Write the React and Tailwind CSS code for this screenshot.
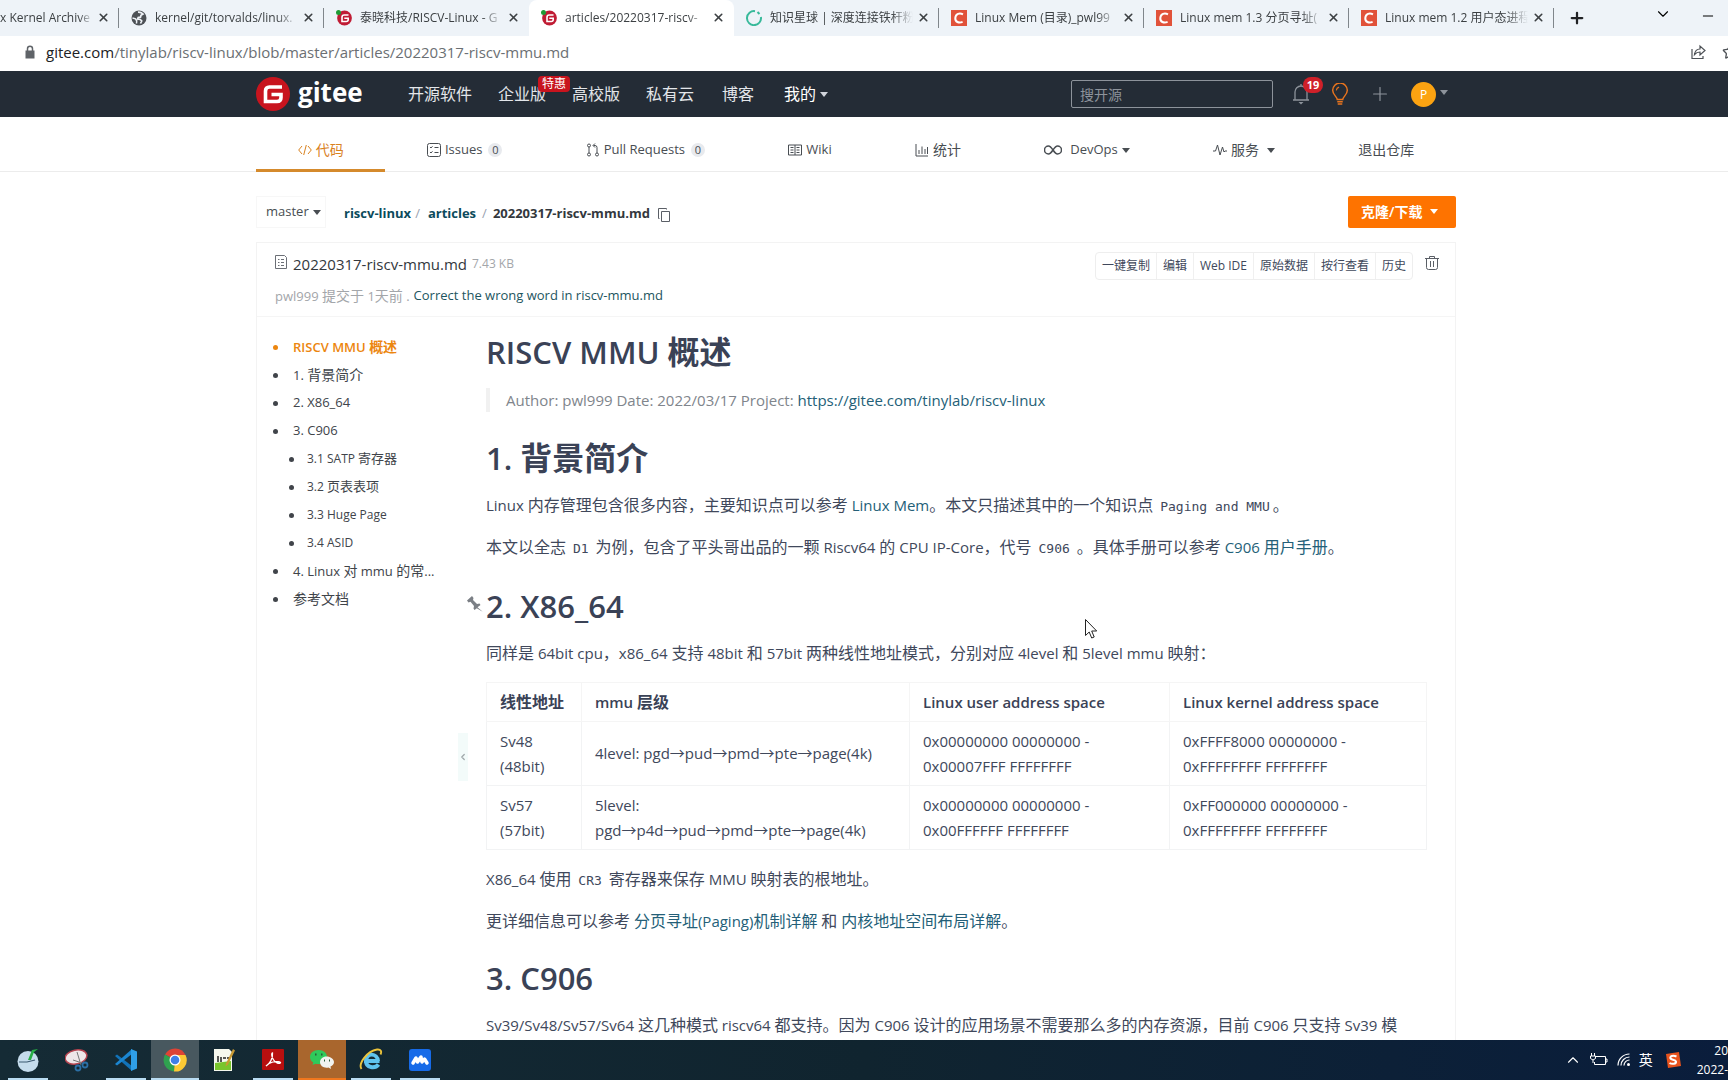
import { ChevronDown, ChevronLeft, ChevronUp, Minus, Plus, Star, X } from 'lucide-react';

const CJK = /([\u2e80-\u9fff\uff00-\uffef]+)/;

// Latin text looks larger than Chinese at the same size, so Chinese runs get their own size
const Mixed = ({ children, cn = 'text-[16px]' }) =>
    children.split(CJK).map((part, i) => (CJK.test(part) ? <span key={i} className={cn}>{part}</span> : part));

const Caret = ({ className = '' }) => (
    <svg viewBox="0 0 8 5" className={`w-2 h-[5px] shrink-0 ${className}`} fill="currentColor">
        <path d="M0 0h8L4 5z" />
    </svg>
);

/* ---------- browser ---------- */

const GlobeIcon = () => (
    <svg viewBox="0 0 16 16" className="w-4 h-4">
        <circle cx="8" cy="8" r="7.500" fill="#4d5156" />
        <path d="M7 2.200C9 2 10.500 2.500 12 4l-2 1.200-.5 2-2.300.3-.6 1.500 2.600.5 1.500 1.500-1.200 2.500" fill="none" stroke="#eef2f7" strokeWidth="1.700" />
        <path d="M1.500 8l3 .8 1.200 2-.2 2.700" fill="none" stroke="#eef2f7" strokeWidth="1.500" />
    </svg>
);

const GiteeIcon = () => (
    <svg viewBox="0 0 16 16" className="w-4 h-4">
        <circle cx="8.500" cy="8" r="7.400" fill="#c01c34" />
        <path d="M12.500 5H8.200Q6 5 6 7.200v4.300h4.200q2 0 2-2V8.300H8.300" fill="none" stroke="#fff" strokeWidth="1.600" />
        <circle cx="2.500" cy="2.500" r="2.500" fill="#1e9a35" />
    </svg>
);

const RingIcon = () => (
    <svg viewBox="0 0 16 16" className="w-4 h-4" fill="none" stroke="#38b99a" strokeWidth="2">
        <path d="M9 1.200A7 7 0 1 0 14.900 7" />
        <path d="M11.500 2l2 2" />
    </svg>
);

const CsdnIcon = () => (
    <svg viewBox="0 0 16 16" className="w-4 h-4">
        <path d="M0 0h16v16H0z" fill="#e1523a" />
        <path d="M12 4.300C8.500 2.600 4.700 3.800 4.300 8c-.3 4 3.500 5.300 7.300 3.900" fill="none" stroke="#fff" strokeWidth="2" />
    </svg>
);

const browserTabs = [
    { title: 'x Kernel Archive', first: true },
    { title: 'kernel/git/torvalds/linux.', icon: <GlobeIcon /> },
    { title: '泰晓科技/RISCV-Linux - G', icon: <GiteeIcon />, last: true },
    { title: 'articles/20220317-riscv-', icon: <GiteeIcon />, active: true },
    { title: '知识星球 | 深度连接铁杆粉', icon: <RingIcon /> },
    { title: 'Linux Mem (目录)_pwl99', icon: <CsdnIcon /> },
    { title: 'Linux mem 1.3 分页寻址(', icon: <CsdnIcon /> },
    { title: 'Linux mem 1.2 用户态进程', icon: <CsdnIcon /> },
];

const BrowserTab = ({ title, icon, active, first, last }) => (
    <div className={`h-9 pb-px shrink-0 flex items-center ${first ? 'w-[119px]' : 'w-[205px] pl-3'} ${active ? 'bg-white rounded-t-lg' : ''}`}>
        {icon}
        <button type="button" className={`flex-1 min-w-0 overflow-hidden whitespace-nowrap text-left text-xs text-[#3c4043] mask-r-from-85% ${icon ? 'ml-2' : ''}`}>
            <Mixed cn="text-xs">{title}</Mixed>
        </button>
        <button type="button" aria-label="Close tab" className="ml-1 mr-2 text-[#3c4043]">
            <X size={13} strokeWidth={3} />
        </button>
        <span className={`w-px h-5 ${active || last ? 'bg-transparent' : 'bg-[#80868b]'}`} />
    </div>
);

const Browser = () => (
    <div className="shrink-0 overflow-hidden">
        <div className="h-9 flex items-center bg-[#eef3f8]">
            {browserTabs.map((tab) => <BrowserTab key={tab.title} {...tab} />)}
            <button type="button" aria-label="New tab" className="ml-[14px] shrink-0 text-[#202124]"><Plus size={18} strokeWidth={3} /></button>
            <button type="button" aria-label="Search tabs" className="ml-auto shrink-0 mb-2"><ChevronDown size={18} strokeWidth={1.5} /></button>
            <button type="button" aria-label="Minimize" className="ml-7 mr-3 shrink-0 mb-1"><Minus size={16} strokeWidth={1.5} /></button>
        </div>
        <div className="h-[35px] pb-[3px] flex items-center bg-white pl-6 overflow-hidden">
            <svg viewBox="0 0 12 14" className="w-3 h-[14px] mr-[10px]">
                <path d="M1.500 5.500h9v8h-9z" fill="#5f6368" />
                <path d="M3.500 6V3.800a2.500 2.500 0 0 1 5 0V6" fill="none" stroke="#5f6368" strokeWidth="1.500" />
            </svg>
            <div className="text-[15px] text-[#6b6f73]">
                <span className="text-[#202124]">gitee.com</span>/tinylab/riscv-linux/blob/master/articles/20220317-riscv-mmu.md
            </div>
            <button type="button" aria-label="Share" className="ml-auto mr-4">
                <svg viewBox="0 0 16 16" className="w-4 h-4" fill="none" stroke="#4d5156" strokeWidth="1.200">
                    <path d="M2 5v9.500h11V12" />
                    <path d="M4.500 10.500C5 7 7 5 10 5V2l5 4.500-5 4.500V8C7.500 8 6 8.800 4.500 10.500z" />
                </svg>
            </button>
            <button type="button" aria-label="Bookmark" className="-mr-[10px] shrink-0 text-[#4d5156]"><Star size={16} /></button>
        </div>
    </div>
);

/* ---------- site header ---------- */

const Header = () => (
    <header className="h-[46px] shrink-0 bg-[#242c36] pr-4">
        <div className="max-w-[1200px] h-full mx-auto flex items-center text-white">
            <a href="#home" className="flex items-center gap-2 w-[152px]">
                <svg viewBox="0 0 34 34" className="w-[34px] h-[34px]">
                    <circle cx="17" cy="17" r="17" fill="#c8141e" />
                    <path d="M26 10H13.500Q9.500 10 9.500 14v10.500h11.500q4 0 4-4V17.500H15.500" fill="none" stroke="#fff" strokeWidth="3.600" />
                </svg>
                <span className="text-[26px] leading-[34px] font-bold pb-1">gitee</span>
            </a>
            <nav className="flex text-[16px] text-[#e3e6ea]">
                <a href="#explore">开源软件</a>
                <a href="#enterprise" className="ml-[26px] relative">
                    企业版
                    <span className="absolute left-10 -top-[6px] w-8 h-[16px] rounded-sm bg-[#c8141e] text-white text-xs leading-4 text-center">特惠</span>
                </a>
                <a href="#education" className="ml-[26px]">高校版</a>
                <a href="#cloud" className="ml-[26px]">私有云</a>
                <a href="#blog" className="ml-7">博客</a>
                <a href="#mine" className="ml-[30px] flex items-center gap-1 text-white">我的 <Caret className="text-gray-300" /></a>
            </nav>
            <input
                type="text"
                aria-label="搜开源"
                placeholder="搜开源"
                className="ml-auto w-[202px] h-7 px-2 rounded-xs border border-[#8d939b] text-sm placeholder:text-[#8d939b]"
            />
            <button type="button" aria-label="通知" className="relative ml-[19px]">
                <svg viewBox="0 0 18 22" className="w-[18px] h-[22px]" fill="none" stroke="#8d939b" strokeWidth="1.300">
                    <path d="M1 17h16M3 17V9a6 6 0 0 1 12 0v8M9 3V1" />
                    <path d="M6.500 19h5L9 21.500z" fill="#8d939b" stroke="none" />
                </svg>
                <span className="absolute left-[11px] -top-[6px] w-5 h-4 rounded-full bg-[#cf2029] text-[11px] leading-4 font-bold text-center">19</span>
            </button>
            <button type="button" aria-label="建议" className="ml-[21px] text-[#e8741e]">
                <svg viewBox="0 0 18 24" className="w-[18px] h-[22px]" fill="none" stroke="currentColor" strokeWidth="1.600">
                    <path d="M6 18c0-3-5-5-5-10a8 8 0 0 1 16 0c0 5-5 7-5 10z" />
                    <path d="M6 20.500h6M6.500 23h5" />
                    <path d="M5 8a4 4 0 0 1 3-3.500" strokeWidth="1.200" />
                </svg>
            </button>
            <button type="button" aria-label="新建" className="ml-5 text-[#8d939b]"><Plus size={22} strokeWidth={1.3} /></button>
            <button type="button" aria-label="个人" className="ml-5 mr-2 flex items-center gap-1 text-[#8d939b]">
                <span className="w-[25px] h-[25px] rounded-full bg-[#fca311] text-white text-xs leading-[25px] text-center">P</span>
                <Caret className="mb-1" />
            </button>
        </div>
    </header>
);

const Count = () => <span className="ml-[6px] w-[14px] h-[14px] rounded-full bg-[#e8eaee] text-[11px] leading-[14px] text-center">0</span>;

const NavIcon = ({ children }) => (
    <svg viewBox="0 0 14 14" className="w-[14px] h-[14px] mr-1" fill="none" stroke="currentColor" strokeWidth="1">
        {children}
    </svg>
);

const repoNav = [
    { label: '代码', active: true, icon: <NavIcon><path d="M4 3L.7 7 4 11M10 3l3.300 4L10 11M8.300 2L5.700 12" /></NavIcon> },
    { label: 'Issues', count: true, icon: <NavIcon><rect x=".5" y=".5" width="13" height="13" rx="2" /><path d="M3 4l1 1 1.500-1.700M3 9l1 1 1.500-1.700M7.500 4.500h4M7.500 9.500h4" /></NavIcon> },
    { label: 'Pull Requests', count: true, icon: <NavIcon><circle cx="3" cy="2.500" r="1.500" /><circle cx="3" cy="11.500" r="1.500" /><circle cx="11" cy="11.500" r="1.500" /><path d="M3 4v6M11 10V4.500Q11 2.500 9 2.500H7.500M9 .5L7 2.500l2 2" /></NavIcon> },
    { label: 'Wiki', icon: <NavIcon><path d="M.5 2h13v10H.5zM7 2v10M2.500 4.500h3M2.500 7h3M2.500 9.500h3M8.500 4.500h3M8.500 7h3M8.500 9.500h3" /></NavIcon> },
    { label: '统计', icon: <NavIcon><path d="M1 1v12h12M4 11V7M7 11V3.500M10 11V6M12.500 11V4" /></NavIcon> },
    { label: 'DevOps', caret: true, icon: <svg viewBox="0 0 18 10" className="w-[18px] h-[10px] mr-2" fill="none" stroke="currentColor" strokeWidth="1.500"><path d="M9 5C7 2 6 1 4.500 1a4 4 0 0 0 0 8C6 9 7 8 9 5s3-4 4.500-4a4 4 0 0 1 0 8C12 9 11 8 9 5z" /></svg> },
    { label: '服务', caret: true, wide: true, icon: <NavIcon><path d="M0 8h2.500l2-6 2.500 10 2.500-8 1.500 5 1 -1h2" /></NavIcon> },
    { label: '退出仓库' },
];

const RepoNav = () => (
    <nav className="h-[55px] shrink-0 border-b border-[#ececec] pr-4">
        <div className="max-w-[1200px] h-[55px] mx-auto flex text-[13px] text-[#484d52]">
            {repoNav.map(({ label, icon, active, count, caret, wide }) => (
                <a
                    key={label}
                    href={`#${label}`}
                    className={`flex-auto flex items-center justify-center pt-[14px] border-b-[3px] ${active ? 'border-[#d58a2c] text-[#d9821f]' : 'border-transparent'}`}
                >
                    {icon}
                    <span><Mixed cn="text-sm">{label}</Mixed></span>
                    {count && <Count />}
                    {caret && <Caret className={wide ? 'ml-2' : 'ml-1'} />}
                </a>
            ))}
        </div>
    </nav>
);

/* ---------- file panel ---------- */

const Breadcrumb = () => (
    <div className="flex items-center h-8 mt-6">
        <button type="button" className="h-8 w-[70px] pl-[9px] flex items-center gap-1 border border-[#f7f7f7] text-[13px] text-[#484d52]">
            master <Caret />
        </button>
        <div className="ml-[18px] pt-[3px] flex items-center text-[13px] font-bold text-[#0c4b5c]">
            <a href="#repo">riscv-linux</a>
            <span className="ml-1 font-normal text-gray-400">/</span>
            <a href="#articles" className="ml-2">articles</a>
            <span className="mx-[6px] font-normal text-gray-400">/</span>
            <span className="text-[#33383d]">20220317-riscv-mmu.md</span>
            <button type="button" aria-label="复制路径" className="ml-2 mt-[2px]">
                <svg viewBox="0 0 12 14" className="w-3 h-[14px]" fill="none" stroke="#5a5f66">
                    <path d="M3.500 3.500h8v10h-8zM1.500 10.500h-1V.5h8v1" />
                </svg>
            </button>
        </div>
        <button type="button" className="ml-auto w-[108px] h-8 pl-[13px] pb-px flex items-center gap-2 rounded-xs bg-[#fe7300] text-white text-[14px] font-semibold">
            克隆/下载 <Caret />
        </button>
    </div>
);

const fileActions = ['一键复制', '编辑', 'Web IDE', '原始数据', '按行查看', '历史'];

const FileHeader = () => (
    <div className="h-[74px] pl-[18px] pr-4 flex border-b border-[#f5f5f5]">
        <div>
            <div className="h-7 mt-[7px] flex items-center">
                <svg viewBox="0 0 12 14" className="w-3 h-[14px] mr-[6px] mb-1" fill="none" stroke="#6b6f76">
                    <path d="M.5.5h9l2 2v11H.5zM3 4.500h1.500M6 4.500h3M3 7.500h1.500M6 7.500h3M3 10.500h1.500M6 10.500h3" />
                </svg>
                <span className="text-[15px] text-[#33383d]">20220317-riscv-mmu.md</span>
                <span className="ml-[5px] text-xs text-[#a3a6aa]">7.43 KB</span>
            </div>
            <div className="h-8 mt-[2px] flex items-center gap-1 text-[13px] text-[#a3a6aa] whitespace-nowrap">
                <span><Mixed cn="text-sm">pwl999 提交于 1天前 .</Mixed></span>
                <a href="#commit" className="text-[#1d5560]">Correct the wrong word in riscv-mmu.md</a>
            </div>
        </div>
        <div className="ml-auto mt-[9px] h-7 flex rounded-sm border border-[#eeeeee] divide-x divide-[#f0f0f0] text-[#40485b]">
            {fileActions.map((label) => (
                <button key={label} type="button" className="px-[6px] whitespace-nowrap text-xs">{label}</button>
            ))}
        </div>
        <button type="button" aria-label="删除" className="ml-3 mt-[13px] self-start">
            <svg viewBox="0 0 14 14" className="w-[14px] h-[14px]" fill="none" stroke="#5a5f66">
                <path d="M0 2.500h14M4.500 2.500v-2h5v2M1.500 2.500v9q0 2 2 2h7q2 0 2-2v-9M5.500 5v6M8.500 5v6" />
            </svg>
        </button>
    </div>
);

const toc = [
    { text: 'RISCV MMU 概述', active: true },
    { text: '1. 背景简介' },
    { text: '2. X86_64' },
    { text: '3. C906' },
    { text: '3.1 SATP 寄存器', sub: true },
    { text: '3.2 页表表项', sub: true },
    { text: '3.3 Huge Page', sub: true },
    { text: '3.4 ASID', sub: true },
    { text: '4. Linux 对 mmu 的常...' },
    { text: '参考文档' },
];

const Toc = () => (
    <ul className="w-[229px] shrink-0 pt-4 pl-4 text-[#40444a]">
        {toc.map(({ text, sub, active }) => (
            <li key={text} className={`h-7 flex items-center whitespace-nowrap ${sub ? 'pl-4 text-xs' : 'text-[13px]'} ${active ? 'text-[#ec860f] font-semibold' : ''}`}>
                <span className={`w-[5px] h-[5px] rounded-full bg-current ${sub ? 'mr-[13px]' : 'mr-[15px]'}`} />
                <a href={`#${text}`}><Mixed cn={sub ? 'text-[13px]' : 'text-sm'}>{text}</Mixed></a>
            </li>
        ))}
    </ul>
);

const H = ({ children, pinned }) => (
    <h1 className="relative h-11 mb-3 text-[31px] leading-[44px] font-semibold text-[#3a4256]">
        {pinned && (
            <svg viewBox="0 0 16 16" className="absolute -left-[19px] top-3 w-4 h-4" fill="#7b7f85">
                <path d="M0 4.500L5 0l1.500 2L6 4l4 4 2.500-.5L13.500 9l-3 2.300 5.200 4.500-5.900-3.600L7.500 14l-1-1.500L7 10 3.500 5.800 1.500 6.500z" />
            </svg>
        )}
        <Mixed cn="text-[32px]">{children}</Mixed>
    </h1>
);

const P = ({ children }) => (
    <p className="mb-4 leading-[26px]">
        {[children].flat().map((part, i) => (typeof part === 'string' ? <Mixed key={i}>{part}</Mixed> : part))}
    </p>
);

const Code = ({ children }) => <code className="px-[3px] font-['DejaVu_Sans_Mono',monospace] text-[13px] leading-4">{children}</code>;

const Link = ({ children }) => <a href="#link" className="text-[#245f78]"><Mixed>{children}</Mixed></a>;

const rows = [
    [['Sv48', '(48bit)'], ['4level: pgd→pud→pmd→pte→page(4k)'], ['0x00000000 00000000 -', '0x00007FFF FFFFFFFF'], ['0xFFFF8000 00000000 -', '0xFFFFFFFF FFFFFFFF']],
    [['Sv57', '(57bit)'], ['5level:', 'pgd→p4d→pud→pmd→pte→page(4k)'], ['0x00000000 00000000 -', '0x00FFFFFF FFFFFFFF'], ['0xFF000000 00000000 -', '0xFFFFFFFF FFFFFFFF']],
];

const AddressTable = () => (
    <table className="w-full mb-4 table-fixed border-collapse leading-[25px] whitespace-nowrap">
        <thead>
            <tr className="text-left text-[#3a4256]">
                <th className="h-[39px] w-[95px] px-[13px] border border-[#f5f5f5] font-semibold"><Mixed>线性地址</Mixed></th>
                <th className="w-[328px] px-[13px] border border-[#f5f5f5] font-semibold"><Mixed>mmu 层级</Mixed></th>
                <th className="w-[260px] px-[13px] border border-[#f5f5f5] font-semibold">Linux user address space</th>
                <th className="px-[13px] border border-[#f5f5f5] font-semibold">Linux kernel address space</th>
            </tr>
        </thead>
        <tbody>
            {rows.map((row, i) => (
                <tr key={i}>
                    {row.map((cell, j) => (
                        <td key={j} className="h-16 px-[13px] border border-[#f2f3f4]">
                            {cell.map((line) => <div key={line}>{line}</div>)}
                        </td>
                    ))}
                </tr>
            ))}
        </tbody>
    </table>
);

const Article = () => (
    <article className="flex-1 min-w-0 pt-[13px] pr-[28px] text-[15px] text-[#40485b]">
        <H>RISCV MMU 概述</H>
        <blockquote className="mt-[14px] mb-6 h-6 pl-4 border-l-4 border-[#f1f1f1] leading-6 text-[#80858c]">
            Author: pwl999 Date: 2022/03/17 Project: <Link>https://gitee.com/tinylab/riscv-linux</Link>
        </blockquote>
        <H>1. 背景简介</H>
        <P>Linux 内存管理包含很多内容，主要知识点可以参考 <Link>Linux Mem</Link>。本文只描述其中的一个知识点 <Code>Paging and MMU</Code>。</P>
        <P>本文以全志 <Code>D1</Code> 为例，包含了平头哥出品的一颗 Riscv64 的 CPU IP-Core，代号 <Code>C906</Code> 。具体手册可以参考 <Link>C906 用户手册</Link>。</P>
        <div className="h-2" />
        <H pinned>2. X86_64</H>
        <P>同样是 64bit cpu，x86_64 支持 48bit 和 57bit 两种线性地址模式，分别对应 4level 和 5level mmu 映射：</P>
        <AddressTable />
        <P>X86_64 使用 <Code>CR3</Code> 寄存器来保存 MMU 映射表的根地址。</P>
        <P>更详细信息可以参考 <Link>分页寻址(Paging)机制详解</Link> 和 <Link>内核地址空间布局详解</Link>。</P>
        <div className="h-[6px]" />
        <H>3. C906</H>
        <P>Sv39/Sv48/Sv57/Sv64 这几种模式 riscv64 都支持。因为 C906 设计的应用场景不需要那么多的内存资源，目前 C906 只支持 Sv39 模</P>
    </article>
);

/* ---------- taskbar ---------- */

const apps = [
    {
        name: 'Notes', bar: 'w-10 bg-[#b9dcf2]',
        icon: <><circle cx="12" cy="13.500" r="10.500" fill="#c5dcec" /><path d="M3 14h8l8-2" stroke="#3c5a70" strokeWidth="1.200" /><path d="M12 12L16 2l6-1-4 3-3 8z" fill="#27ae45" /></>,
    },
    {
        name: 'Snipping Tool', bar: 'bg-transparent',
        icon: <><ellipse cx="11" cy="9" rx="11" ry="7" fill="#eee6e8" stroke="#b5434f" strokeWidth="1.500" transform="rotate(-12 11 9)" /><path d="M12 4l4 13M8 12l9 3" stroke="#777" /><circle cx="13" cy="20" r="2.500" stroke="#2b6fa5" strokeWidth="1.800" /><circle cx="20" cy="17" r="2.500" stroke="#2b6fa5" strokeWidth="1.800" /></>,
    },
    {
        name: 'VS Code', bar: 'w-10 bg-[#b9dcf2]',
        icon: <><path d="M1 8l2-1.500L18 18v5z" fill="#1273b8" /><path d="M1 16l2 1.500L18 6V1z" fill="#1b86d1" /><path d="M17 1l6 2.500v17L17 23z" fill="#2f9fe8" /></>,
    },
    {
        name: 'Chrome', active: true, bar: 'w-12 bg-[#b9dcf2]',
        icon: <><path d="M12 12L2 6.500A11.500 11.500 0 0 1 22.500 7z" fill="#de4335" /><path d="M12 12L2 6.500A11.500 11.500 0 0 0 11 23.500z" fill="#2fa14f" /><path d="M12 12L11 23.500A11.500 11.500 0 0 0 22.500 7H12z" fill="#fcc934" /><circle cx="12" cy="12" r="5.500" fill="#fff" /><circle cx="12" cy="12" r="4.300" fill="#3f7fe8" /></>,
    },
    {
        name: 'Notepad++', bar: 'bg-transparent',
        icon: <><path d="M2 1h15l3 3v19H2z" fill="#f5f8ee" /><path d="M3 15l16-2v9H3z" fill="#79c52d" /><path d="M6 8v6M9 9v5M11 10h3M15 10h3" stroke="#222" strokeWidth="1.500" /><path d="M21 1l2 1.500-7 14-2.500 2 .5-3z" fill="#c99a33" /></>,
    },
    {
        name: 'Acrobat', bar: 'w-10 bg-[#b9dcf2]',
        icon: <><rect x="1" y="1" width="22" height="21" rx="1" fill="#b80f0f" /><path d="M5 18c4-2 7-8 6.500-13-1 0-1.300 3 .8 6.500s5.500 4.500 7 3.500-4-2-7.500-1S6 17 5 18z" stroke="#fff" strokeWidth="1.300" /></>,
    },
    {
        name: 'WeChat', alert: true, bar: 'w-12 bg-[#f0771e]',
        icon: <><path d="M8.500 2C3.500 2 0 5 0 9c0 2.500 1.300 4.300 3.300 5.600L2.500 17l3-1.300c6 1.300 11.500-1.500 11.500-6.700 0-4-3.500-7-8.500-7z" fill="#2fca5b" /><path d="M16.500 8.500C12.700 8.500 10 11 10 14c0 4 4 6.500 8.500 5.500L21 21l-.5-2.500C22.500 17.500 24 16 24 14c0-3-3.500-5.500-7.500-5.500z" fill="#f1f3f0" /><path d="M5 6.500h1.500M11 6.500h1.500M14 12.500h1M19 12.500h1" stroke="#2a5b38" strokeWidth="1.800" /></>,
    },
    {
        name: 'Internet Explorer', bar: 'w-10 bg-[#b9dcf2]',
        icon: <><path d="M20.500 13H7c0-9 11.500-8 12 0M7 13c0 7 9 8 12.500 3.500" stroke="#5fc3ee" strokeWidth="4" /><path d="M2.500 21C-1 16 8 3 18 1.500c4-.5 5 2 3.500 5" stroke="#ecc43b" strokeWidth="1.900" /></>,
    },
    {
        name: 'Meeting', bar: 'w-10 bg-[#b9dcf2]',
        icon: <><rect x="1" y="1" width="22" height="22" rx="3" fill="#176be8" /><path d="M5 15l3-5 1.500 4 3.500-5 1 5 2.500-3 2.500 4" stroke="#fff" strokeWidth="3.500" strokeLinejoin="round" strokeLinecap="round" /></>,
    },
];

const Taskbar = () => (
    <footer className="h-10 shrink-0 flex items-center bg-linear-to-r from-[#152b35] via-[#10242f] to-[#0a1d3c] pl-1 text-white overflow-hidden">
        <div className="flex gap-px">
            {apps.map(({ name, icon, bar, active, alert }) => (
                <button key={name} type="button" aria-label={name} className={`w-12 h-10 flex flex-col items-center ${active ? 'bg-[#48585f]' : ''} ${alert ? 'bg-[#a9662d]' : ''}`}>
                    <svg viewBox="0 0 24 24" className="w-6 h-6 mt-2" fill="none">{icon}</svg>
                    <span className={`h-[2px] mt-auto ${bar}`} />
                </button>
            ))}
        </div>
        <div className="ml-auto flex items-center shrink-0">
            <ChevronUp size={18} strokeWidth={1.5} />
            <svg viewBox="0 0 18 14" className="w-[18px] h-[14px] ml-2" fill="none" stroke="#fff">
                <path d="M5 3.500h10.500v8H4.500V9M15.500 6H17v3h-1.500M1.500 0v3M4.500 0v3M.5 3h5v2.500L3 7 .5 5.500zM3 7v3" />
            </svg>
            <svg viewBox="0 0 14 14" className="w-[14px] h-[14px] ml-[9px]" fill="none" stroke="#fff" strokeWidth="1.200">
                <path d="M1 12.500A11.500 11.500 0 0 1 12.500 1M4 12.500A8.500 8.500 0 0 1 12.500 4M7 12.500A5.500 5.500 0 0 1 12.500 7" />
                <circle cx="11.500" cy="11.500" r="1.500" fill="#fff" stroke="none" />
            </svg>
            <span className="ml-2 text-sm">英</span>
            <svg viewBox="0 0 16 16" className="w-4 h-4 ml-3" fill="none">
                <path d="M1 2l13-2 2 14-13 2z" fill="#e8531d" />
                <path d="M11.500 4.500C8 3 4.500 4 5.500 6.500c.8 1.500 5 1 5.500 3 .3 2.500-4 3-6.500 1.500" stroke="#fff" strokeWidth="2" />
            </svg>
            <div className="ml-[16px] text-xs leading-[19px]">
                <div className="text-right">20</div>
                <div className="whitespace-nowrap">2022-</div>
            </div>
        </div>
    </footer>
);

export default function App() {
    return (
        <div lang="zh-CN" className="relative h-screen flex flex-col overflow-hidden bg-white font-['Open_Sans','Noto_Sans_CJK_SC',sans-serif]">
            <Browser />
            <Header />
            <RepoNav />
            <main className="flex-1 min-h-0 overflow-hidden pr-4">
                <div className="max-w-[1200px] mx-auto">
                    <Breadcrumb />
                    <section className="relative mt-[14px] border border-[#f3f3f3]">
                        <FileHeader />
                        <div className="flex">
                            <Toc />
                            <Article />
                        </div>
                        <button type="button" aria-label="收起目录" className="absolute left-[201px] top-[490px] w-[10px] h-12 bg-[#f3fbfa] text-[#a0a8ab]">
                            <ChevronLeft size={10} strokeWidth={3} />
                        </button>
                    </section>
                </div>
            </main>
            <Taskbar />
            <svg viewBox="0 0 12 20" className="absolute left-[1085px] top-[619px] w-3 h-5" fill="#fff" stroke="#222">
                <path d="M.5.5v16l3.700-3.500 2.500 6 2.500-1-2.500-6h5z" />
            </svg>
        </div>
    );
}
